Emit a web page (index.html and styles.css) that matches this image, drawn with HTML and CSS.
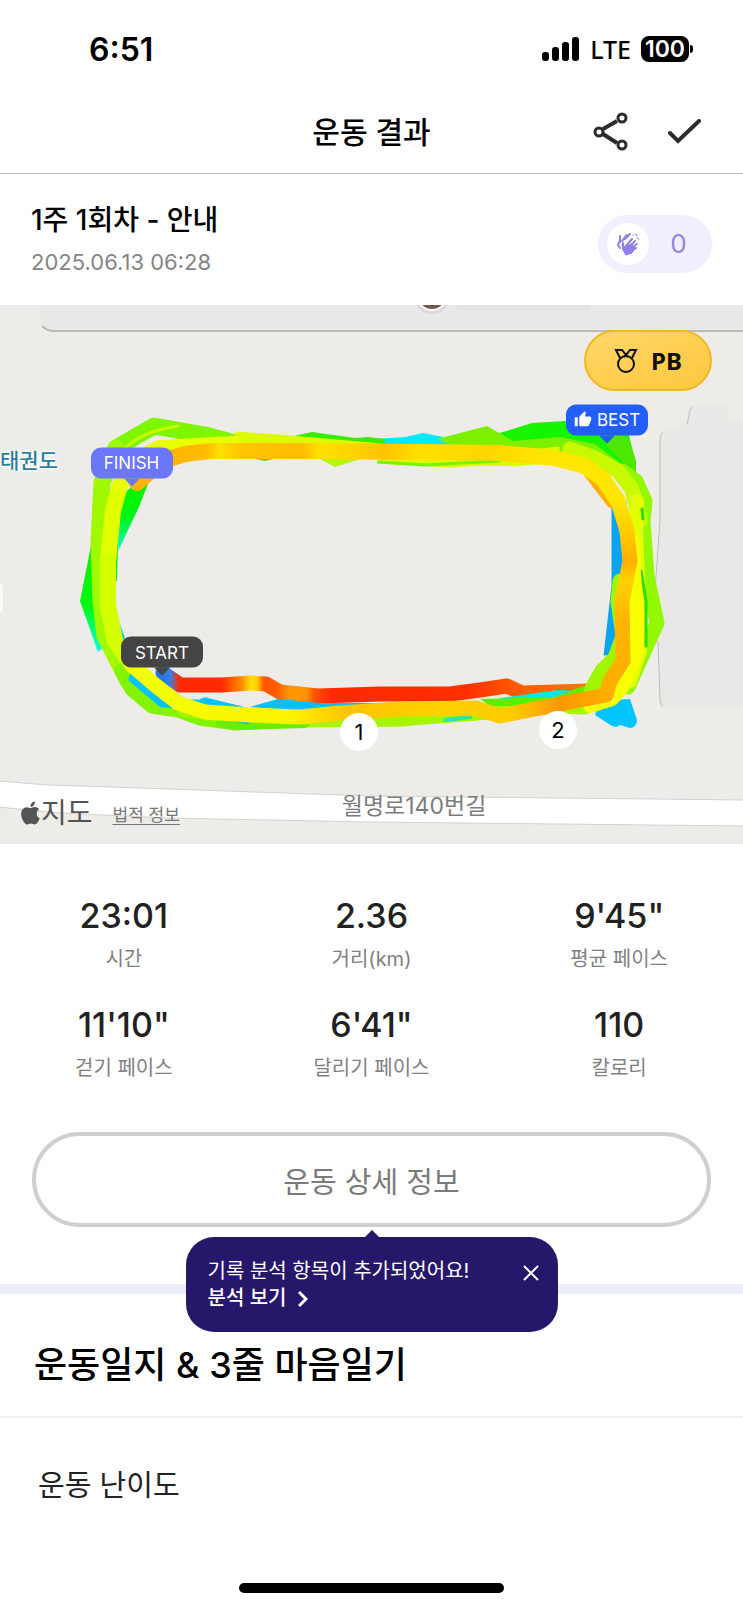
FILE: index.html
```
<!DOCTYPE html>
<html lang="ko">

<head>
    <meta charset="UTF-8">
    <meta name="viewport" content="width=device-width, initial-scale=1.0">
    <title>운동 결과</title>
    <link rel="stylesheet" href="styles.css">
</head>

<body>
    <div class="status-bar">
        <span class="time">6:51</span>
        <div class="status-icons">
            <svg class="signal" width="38" height="24" viewBox="0 0 38 24">
                <rect x="0" y="15" width="7" height="9" rx="3" />
                <rect x="10" y="10" width="7" height="14" rx="3" />
                <rect x="20" y="5" width="7" height="19" rx="3" />
                <rect x="30" y="0" width="7" height="24" rx="3" />
            </svg>
            <span class="network">LTE</span>
            <span class="battery">100</span>
        </div>
    </div>

    <header class="header">
        <h1>운동 결과</h1>
        <div class="actions">
            <button class="icon-button" aria-label="공유">
                <svg width="36" height="40" viewBox="0 0 36 40" fill="none" stroke="#2c2c2c" stroke-width="3">
                    <path d="M10 17l14-8M10 22l14 9" stroke-width="4" />
                    <circle cx="6" cy="20" r="4" />
                    <circle cx="29" cy="6" r="4" />
                    <circle cx="29" cy="33" r="4" />
                </svg>
            </button>
            <button class="icon-button" aria-label="확인">
                <svg width="34" height="26" viewBox="0 0 34 26" fill="none" stroke="#2c2c2c" stroke-width="4" stroke-linecap="round">
                    <path d="M3 14l8 8L32 2" />
                </svg>
            </button>
        </div>
    </header>

    <section class="session">
        <div>
            <h2>1주 1회차 - 안내</h2>
            <time datetime="2025-06-13T06:28">2025.06.13 06:28</time>
        </div>
        <button class="clap" aria-label="박수 0">
            <span class="clap-icon">
                <svg width="24" height="24" viewBox="0 0 24 24" fill="none" stroke="#8f7fe6" stroke-linecap="round">
                    <path d="M4 10V4M4 8l-2 5 2 3M6 9l5-6M9 7l5-5" stroke-width="2" />
                    <path d="M6 13l1 5 3 5 6-2 3-5-4-4-5 3z" fill="#8f7fe6" stroke-width="1" />
                    <path d="M7 17V11M10 14l6-7M12 16l7-7M14 17l7-5M16 18l4-2" stroke-width="2" />
                    <path d="M17 3l1 0M20 2l1 2M21 6l2 1" stroke-width="1" />
                </svg>
            </span>
            <span class="clap-count">0</span>
        </button>
    </section>

    <section class="map">
        <svg class="map-canvas" viewBox="0 304 743 539" aria-hidden="true">
            <defs>
                <linearGradient id="run" gradientUnits="userSpaceOnUse" x1="162" y1="0" x2="585" y2="0">
                    <stop offset="0" stop-color="#2277e8" />
                    <stop offset=".02" stop-color="#3a80df" />
                    <stop offset=".04" stop-color="#ff2a00" />
                    <stop offset=".14" stop-color="#ff2a00" />
                    <stop offset=".19" stop-color="#ff9000" />
                    <stop offset=".21" stop-color="#ffe100" />
                    <stop offset=".225" stop-color="#ffd000" />
                    <stop offset=".24" stop-color="#ff5a00" />
                    <stop offset=".27" stop-color="#ff5a00" />
                    <stop offset=".3" stop-color="#ff9500" />
                    <stop offset=".34" stop-color="#ff9500" />
                    <stop offset=".36" stop-color="#ff5500" />
                    <stop offset=".4" stop-color="#ff2a00" />
                    <stop offset=".72" stop-color="#ff2f00" />
                    <stop offset=".85" stop-color="#ff6000" />
                    <stop offset="1" stop-color="#ff7300" />
                </linearGradient>
                <linearGradient id="top" gradientUnits="userSpaceOnUse" x1="165" y1="0" x2="620" y2="0">
                    <stop offset="0" stop-color="#ffb400" />
                    <stop offset=".09" stop-color="#ffbd00" />
                    <stop offset=".12" stop-color="#ffe000" />
                    <stop offset=".17" stop-color="#ffc400" />
                    <stop offset=".3" stop-color="#ffbd00" />
                    <stop offset=".34" stop-color="#ffe000" />
                    <stop offset=".43" stop-color="#ffd000" />
                    <stop offset=".48" stop-color="#ffc300" />
                    <stop offset=".56" stop-color="#ffe000" />
                    <stop offset=".7" stop-color="#ffd600" />
                    <stop offset=".85" stop-color="#ffe800" />
                    <stop offset="1" stop-color="#ffe600" />
                </linearGradient>
                <linearGradient id="side" gradientUnits="userSpaceOnUse" x1="0" y1="500" x2="0" y2="700">
                    <stop offset="0" stop-color="#ffe600" />
                    <stop offset=".15" stop-color="#ffcd00" />
                    <stop offset=".3" stop-color="#ffb000" />
                    <stop offset=".4" stop-color="#ffd000" />
                    <stop offset=".6" stop-color="#ffb500" />
                    <stop offset="1" stop-color="#ffad00" />
                </linearGradient>
                <linearGradient id="bottom" gradientUnits="userSpaceOnUse" x1="150" y1="0" x2="620" y2="0">
                    <stop offset="0" stop-color="#f2ff00" />
                    <stop offset=".3" stop-color="#fff200" />
                    <stop offset=".42" stop-color="#ffc400" />
                    <stop offset=".6" stop-color="#ffd000" />
                    <stop offset=".77" stop-color="#ffcc00" />
                    <stop offset=".87" stop-color="#ff9900" />
                    <stop offset="1" stop-color="#ffb300" />
                </linearGradient>
                <linearGradient id="drop" gradientUnits="userSpaceOnUse" x1="0" y1="500" x2="0" y2="548">
                    <stop offset="0" stop-color="#00f500" />
                    <stop offset=".4" stop-color="#00f520" />
                    <stop offset="1" stop-color="#00ffd0" />
                </linearGradient>
                <linearGradient id="outer" gradientUnits="userSpaceOnUse" x1="0" y1="560" x2="0" y2="650">
                    <stop offset="0" stop-color="#10f000" />
                    <stop offset=".5" stop-color="#00fa10" />
                    <stop offset="1" stop-color="#00ffe0" />
                </linearGradient>
            </defs>

            <!-- blocks and road -->
            <path d="M40 304H743V329H52Q42 327 40 318z" fill="#e9e9e7" />
            <path d="M42 325Q47 330 54 330H743" fill="none" stroke="#bcbcb6" stroke-width="2" />
            <path d="M692 404H728V418L743 421V706H663Q660 704 659 694L657 590 660 520V440Q661 430 668 428L687 423z" fill="#e9e8e6" />
            <path d="M692 406Q688 410 689 415L687 423M663 431Q660 433 660 440V520L655 590M658 640L660 698Q660 704 663 706" fill="none" stroke="#bdbdbb" stroke-width="1" />
            <rect x="456" y="303" width="134" height="7" rx="3" fill="#e4e3e1" />
            <circle cx="432" cy="295" r="18" fill="#dad9d7" />
            <circle cx="432" cy="293" r="17" fill="#fff" />
            <circle cx="432" cy="294" r="14" fill="#77564a" />
            <path d="M-2 780L48 784 140 787 370 795 745 799V825L370 821 170 817 60 812 -2 806z" fill="#fff" stroke="#d3d2d0" />
            <rect x="-10" y="582" width="13" height="29" rx="3" fill="#fafafa" />

            <g fill="none" stroke-width="15" stroke-linejoin="round" stroke-linecap="round">
                <!-- early laps: blue, cyan and green edges -->
                <path d="M619 500V585L611 655" stroke="#0aa5ee" stroke-linecap="butt" />
                <path d="M590 470L613 500" stroke="#ffae00" />
                <path d="M116 612L126 640 110 640z" stroke="none" fill="#00cfff" />
                <path d="M122 660L135 678 174 706H205M205 704L250 715" stroke="#00c3ff" />
                <path d="M595 714L612 725Q618 727 620 724L630 727Q637 726 637 719L630 698 600 700z" stroke="none" fill="#00c6ff" />
                <path d="M377 438L405 436 423 432 443 436 450 445H377z" stroke="none" fill="#00e9ff" />
                <path d="M91 545L80 600 98 651 110 640V545z" stroke="none" fill="url(#outer)" />
                <path d="M132 485L150 478 138 508 120 546 112 560 117 500z" stroke="none" fill="url(#drop)" />
                <path d="M118 542L117 580H110V545z" stroke="none" fill="#10e820" />
                <path d="M285 437L312 431 355 437 368 436 385 438V454H285z" stroke="none" fill="#37ed00" />
                <path d="M248 456L265 460 280 456z" stroke="none" fill="#3ee600" />
                <path d="M500 432L532 422 565 420 628 431 636 462V476L590 455 500 448z" stroke="none" fill="#16f400" />
                <path d="M437 438L487 425 513 440 560 436 595 443 620 462 470 452z" stroke="none" fill="#7df000" />
                <path d="M618 430L628 437 636 460V474L606 444z" stroke="none" fill="#4de800" />

                <!-- lime laps -->
                <path d="M116 447L154 425 205 434 235 442 290 445" stroke="#80f500" stroke-width="17" />
                <path d="M125 447Q143 430 178 425" stroke="#c4fa00" stroke-width="3" />
                <path d="M116 447L102 482 99 540 101 600 105 635 128 680" stroke="#a0f900" stroke-width="17" />
                <path d="M122 670L132 688 152 705 178 709 200 717 236 722 300 718 380 718 475 712" stroke="#83f300" />
                <path d="M133 665L152 685 178 708 160 706 128 679z" stroke="none" fill="#00c3ff" />
                <path d="M185 708L225 714 265 717 305 719 400 718 475 712 560 705 585 706" stroke="#a6f500" />
                <path d="M220 722L240 725 305 723" stroke="#6aed00" stroke-width="8" />
                <path d="M218 716L248 721" stroke="#00c8d0" stroke-width="4" />
                <path d="M445 719L470 716" stroke="#27eaa0" stroke-width="4" />
                <path d="M589 693L602 670 615 657 623 635 618 600 620 580" stroke="#a0f500" />
                <path d="M622 470L636 480 645 500 643 520 647 575 657 622 628 686" stroke="#93f700" />
                <path d="M570 448L595 457 618 470 632 488 640 520" stroke="#c8f900" />
                <g stroke-linecap="butt">
                    <path d="M235 438L290 442 370 449 450 459M380 455L453 459 480 457 515 458 560 453" stroke="#dcfa00" />
                    <path d="M377 461L425 464 500 460" stroke="#7bf000" stroke-width="3" />
                </g>
                <path d="M320 458L335 466 360 458z" stroke="none" fill="#b7f500" />
                <path d="M637 500L636 530 639 600 640 650 630 680" stroke="#e3ff00" stroke-width="14" />
                <path d="M642 508L643 518M641 570L646 600V645" stroke="#28df00" stroke-width="3" />

                <!-- first run -->
                <path d="M163 672L180 684H222L250 682 266 683 280 691 318 695 380 693H450L480 689 507 685 522 692 590 690" stroke="url(#run)" />
                <path d="M250 706L278 698 320 702 380 702 450 702V710H300z" stroke="none" fill="#00c0fa" />
                <path d="M500 697L558 689 580 690V700H500z" stroke="none" fill="#00ebdc" />
                <path d="M480 698L555 696 583 685 600 690 580 705H490z" stroke="none" fill="#60eb00" />
                <path d="M591 690L602 670 615 657" stroke="#a0f500" />

                <!-- last lap -->
                <path d="M152 452Q130 464 120 484L113 510 108 560 108 605 115 640 133 665" stroke="#e2ff00" stroke-width="16" />
                <path d="M120 484Q130 458 160 446L235 442" stroke="#eaff00" stroke-width="14" />
                <path d="M108 560V605L115 640 135 665" stroke="#d4ff00" stroke-width="16" />
                <path d="M632 540L637 620 636 655 622 687 612 698 590 705" stroke="#f8ff00" stroke-width="14" />
                <path d="M133 665L155 684 178 702 205 711 250 714 300 716 340 712 400 708 475 707 500 715 550 705 606 694" stroke="url(#bottom)" />
                <path d="M137 482L162 460 185 453 210 450 300 450 420 451 500 452 555 457 585 465 603 478 618 500" stroke="url(#top)" stroke-width="16" />
                <path d="M618 500L627 530 630 560 622 600 623 660 610 680 606 694" stroke="url(#side)" />
            </g>
        </svg>

        <span class="place place-gym">태권도</span>
        <span class="place place-road">월명로140번길</span>

        <span class="pin pin-finish">FINISH</span>
        <span class="pin pin-start">START</span>
        <span class="pin pin-best">
            <svg width="18" height="18" viewBox="0 0 24 24" fill="#fff">
                <path d="M1 21h4V9H1v12zm22-11c0-1.1-.9-2-2-2h-6.31l.95-4.57.03-.32c0-.41-.17-.79-.44-1.06L14.17 1 7.59 7.59C7.22 7.95 7 8.45 7 9v10c0 1.1.9 2 2 2h9c.83 0 1.54-.5 1.84-1.22l3.02-7.05c.09-.23.14-.47.14-.73v-2z" />
            </svg>
            BEST
        </span>
        <span class="km km-1">1</span>
        <span class="km km-2">2</span>

        <div class="badge">
            <svg width="24" height="26" viewBox="0 0 24 26" fill="none" stroke="#111" stroke-width="2">
                <circle cx="12" cy="16" r="8" />
                <path d="M6 10L2 2h6l4 5 4-5h6l-4 8M12 7l-2 2M12 7l2 2" />
            </svg>
            PB
        </div>

        <div class="map-credit">
            <span class="map-brand">
                <svg width="20" height="24" viewBox="1 0 21 24" fill="#555">
                    <path d="M12.152 6.896c-.948 0-2.415-1.078-3.96-1.04-2.04.027-3.91 1.183-4.961 3.014-2.117 3.675-.546 9.103 1.519 12.09 1.013 1.454 2.208 3.09 3.792 3.039 1.52-.065 2.09-.987 3.935-.987 1.831 0 2.35.987 3.96.948 1.637-.026 2.676-1.48 3.676-2.948 1.156-1.688 1.636-3.325 1.662-3.415-.039-.013-3.182-1.221-3.22-4.857-.026-3.04 2.48-4.494 2.597-4.559-1.429-2.09-3.623-2.324-4.39-2.376-2-.156-3.675 1.09-4.61 1.09zM15.53 3.83c.843-1.012 1.4-2.427 1.245-3.83-1.207.052-2.662.805-3.532 1.818-.78.896-1.454 2.338-1.273 3.714 1.338.104 2.715-.688 3.559-1.701" />
                </svg>지도</span>
            <a href="#">법적 정보</a>
        </div>
    </section>

    <dl class="stats">
        <div class="stat">
            <dt>시간</dt>
            <dd>23:01</dd>
        </div>
        <div class="stat">
            <dt>거리(km)</dt>
            <dd>2.36</dd>
        </div>
        <div class="stat">
            <dt>평균 페이스</dt>
            <dd>9'45"</dd>
        </div>
        <div class="stat">
            <dt>걷기 페이스</dt>
            <dd>11'10"</dd>
        </div>
        <div class="stat">
            <dt>달리기 페이스</dt>
            <dd>6'41"</dd>
        </div>
        <div class="stat">
            <dt>칼로리</dt>
            <dd>110</dd>
        </div>
    </dl>

    <div class="detail">
        <button class="detail-button">운동 상세 정보</button>
        <div class="tooltip">
            <div>
                <p>기록 분석 항목이 추가되었어요!</p>
                <a href="#">분석 보기
                    <svg width="10" height="18" viewBox="0 0 10 18" fill="none" stroke="#fff" stroke-width="3">
                        <path d="M1 2l7 7-7 7" />
                    </svg>
                </a>
            </div>
            <button class="close" aria-label="닫기">
                <svg width="16" height="16" viewBox="0 0 16 16" fill="none" stroke="#fff" stroke-width="2">
                    <path d="M1 1l14 14M15 1L1 15" />
                </svg>
            </button>
        </div>
    </div>

    <section class="diary">
        <h2>운동일지 &amp; 3줄 마음일기</h2>
        <h3>운동 난이도</h3>
    </section>

    <div class="home-indicator"></div>
</body>

</html>
```

FILE: styles.css
```
* {
    box-sizing: border-box;
}

body {
    margin: 0;
    min-height: 100vh;
    display: flex;
    flex-direction: column;
    background: #fff;
    color: #000;
    font-family: Inter, 'Noto Sans CJK KR', sans-serif;
}

h1,
h2,
h3,
p,
dl,
dd {
    margin: 0;
}

h1,
h2,
dd {
    font-weight: 500;
}

button {
    border: 0;
    padding: 0;
    background: none;
    font-family: inherit;
    cursor: pointer;
}

svg {
    display: block;
    flex: none;
}

.status-bar {
    display: flex;
    justify-content: space-between;
    align-items: center;
    height: 98px;
    padding: 0 54px 0 89px;
}

.time {
    font-size: 32px;
    font-weight: 600;
}

.status-icons {
    display: flex;
    align-items: center;
    gap: 10px;
}

.network {
    font-family: 'Noto Sans', sans-serif;
    font-size: 25px;
    font-weight: 500;
    line-height: 26px;
}

.battery {
    position: relative;
    width: 48px;
    border-radius: 8px;
    background: #000;
    color: #fff;
    font-size: 23px;
    font-weight: 600;
    line-height: 26px;
    text-align: center;
}

.battery::after {
    content: "";
    position: absolute;
    top: 9px;
    right: -4px;
    width: 3px;
    height: 8px;
    border-radius: 0 3px 3px 0;
    background: #000;
}

.header {
    display: grid;
    grid-template-columns: 1fr auto 1fr;
    align-items: center;
    height: 76px;
    padding: 0 42px 8px;
    border-bottom: 1px solid #b9b9b9;
}

.header h1 {
    grid-column: 2;
    font-size: 30px;
    line-height: 40px;
}

.actions {
    display: flex;
    justify-content: flex-end;
    align-items: center;
    gap: 38px;
}

.session {
    display: flex;
    justify-content: space-between;
    align-items: center;
    height: 131px;
    padding: 4px 31px 4px;
}

.session h2 {
    font-size: 28px;
    font-weight: 500;
    line-height: 40px;
}

.session time {
    display: block;
    margin-top: 4px;
    color: #858585;
    font-size: 22px;
    line-height: 36px;
}

.clap {
    display: flex;
    align-items: center;
    width: 114px;
    height: 58px;
    margin-top: 8px;
    padding: 0 4px 0 9px;
    border-radius: 29px;
    background: #f1effd;
    color: #9386dd;
}

.clap-icon {
    display: grid;
    place-items: center;
    width: 42px;
    height: 42px;
    border-radius: 50%;
    background: #fff;
}

.clap-count {
    flex: 1;
    font-size: 26px;
    text-align: center;
}

.map {
    position: relative;
    aspect-ratio: 743 / 539;
    overflow: hidden;
    background: #edece9;
}

.map-canvas {
    width: 100%;
    height: 100%;
}

.place {
    position: absolute;
    font-size: 23px;
    line-height: 32px;
    white-space: nowrap;
}

.place-gym {
    top: 26%;
    left: 0;
    color: #2d7d9d;
    font-size: 21px;
    font-weight: 500;
    text-shadow: 0 0 3px #fff, 0 0 3px #fff, 2px 0 3px #fff, -2px 0 3px #fff;
}

.place-road {
    top: 90%;
    left: 46%;
    color: #7c7c7c;
}

.pin {
    position: absolute;
    display: flex;
    justify-content: center;
    align-items: center;
    gap: 5px;
    width: 82px;
    height: 31px;
    border-radius: 10px;
    color: #fff;
    font-size: 17px;
    transform: translate(-50%, -50%);
}

/* little tail below the pin */
.pin::after {
    content: "";
    position: absolute;
    top: 100%;
    left: 50%;
    margin-left: -8px;
    border: 8px solid transparent;
    border-bottom: 0;
    border-top-color: inherit;
}

.pin-finish {
    top: 29.3%;
    left: 17.7%;
    background: #6b76f8;
    border-color: #6b76f8;
}

.pin-start {
    top: 64.4%;
    left: 21.8%;
    background: #444;
    border-color: #444;
}

.pin-best {
    top: 21.3%;
    left: 81.7%;
    background: #235dfa;
    border-color: #235dfa;
}

.km {
    position: absolute;
    width: 38px;
    height: 38px;
    border-radius: 50%;
    background: #fff;
    font-size: 22px;
    line-height: 38px;
    text-align: center;
    transform: translate(-50%, -50%);
}

.km-1 {
    top: 79.3%;
    left: 48.3%;
}

.km-2 {
    top: 78.8%;
    left: 75.1%;
}

.badge {
    position: absolute;
    top: 25px;
    right: 31px;
    display: flex;
    justify-content: center;
    align-items: center;
    gap: 13px;
    width: 128px;
    height: 61px;
    border: 2px solid #f5b625;
    border-radius: 31px;
    background: linear-gradient(160deg, #ffd769, #ffc73d);
    color: #111;
    font-family: 'Noto Sans', sans-serif;
    font-size: 24px;
    font-weight: 700;
}

.map-credit {
    position: absolute;
    bottom: 13px;
    left: 20px;
    display: flex;
    align-items: center;
    gap: 20px;
}

.map-brand {
    display: flex;
    align-items: center;
    gap: 1px;
    color: #555;
    font-size: 28px;
    line-height: 36px;
}

.map-credit a {
    color: #777;
    font-size: 17px;
    text-underline-offset: 3px;
}

.stats {
    display: grid;
    grid-template-columns: repeat(3, 1fr);
    row-gap: 29px;
    padding: 50px 0 49px;
}

.stat {
    display: flex;
    flex-direction: column-reverse;
    align-items: center;
}

.stat dt {
    margin-top: 6px;
    color: #7f7f7f;
    font-size: 20px;
    line-height: 30px;
}

.stat dd {
    color: #212121;
    font-size: 34px;
    line-height: 44px;
}

.detail {
    position: relative;
    padding: 0 32px 57px;
    border-bottom: 10px solid #eceef7;
}

.detail-button {
    display: block;
    width: 100%;
    height: 95px;
    border: 4px solid #cfcfcf;
    border-radius: 48px;
    color: #7a7a7a;
    font-size: 29px;
}

.tooltip {
    position: absolute;
    top: 105px;
    left: 50%;
    display: flex;
    justify-content: space-between;
    align-items: flex-start;
    width: 372px;
    padding: 21px 19px 20px 22px;
    border-radius: 28px;
    background: #27176b;
    color: #fff;
    font-size: 20px;
    line-height: 27px;
    white-space: nowrap;
    transform: translateX(-50%);
}

.tooltip::before {
    content: "";
    position: absolute;
    bottom: 100%;
    left: 50%;
    margin-left: -7px;
    border: 7px solid transparent;
    border-top: 0;
    border-bottom-color: #27176b;
}

.tooltip a {
    display: flex;
    align-items: center;
    gap: 12px;
    color: inherit;
    font-weight: 500;
    text-decoration: none;
}

.close {
    padding-top: 7px;
}

.diary h2 {
    padding: 45px 34px 25px;
    border-bottom: 2px solid #eeeff3;
    font-size: 36px;
    line-height: 52px;
}

.diary h3 {
    padding: 48px 38px;
    color: #222;
    font-size: 29px;
    font-weight: 400;
    line-height: 40px;
}

.home-indicator {
    width: 265px;
    height: 10px;
    margin: auto auto 15px;
    border-radius: 5px;
    background: #000;
}
```
